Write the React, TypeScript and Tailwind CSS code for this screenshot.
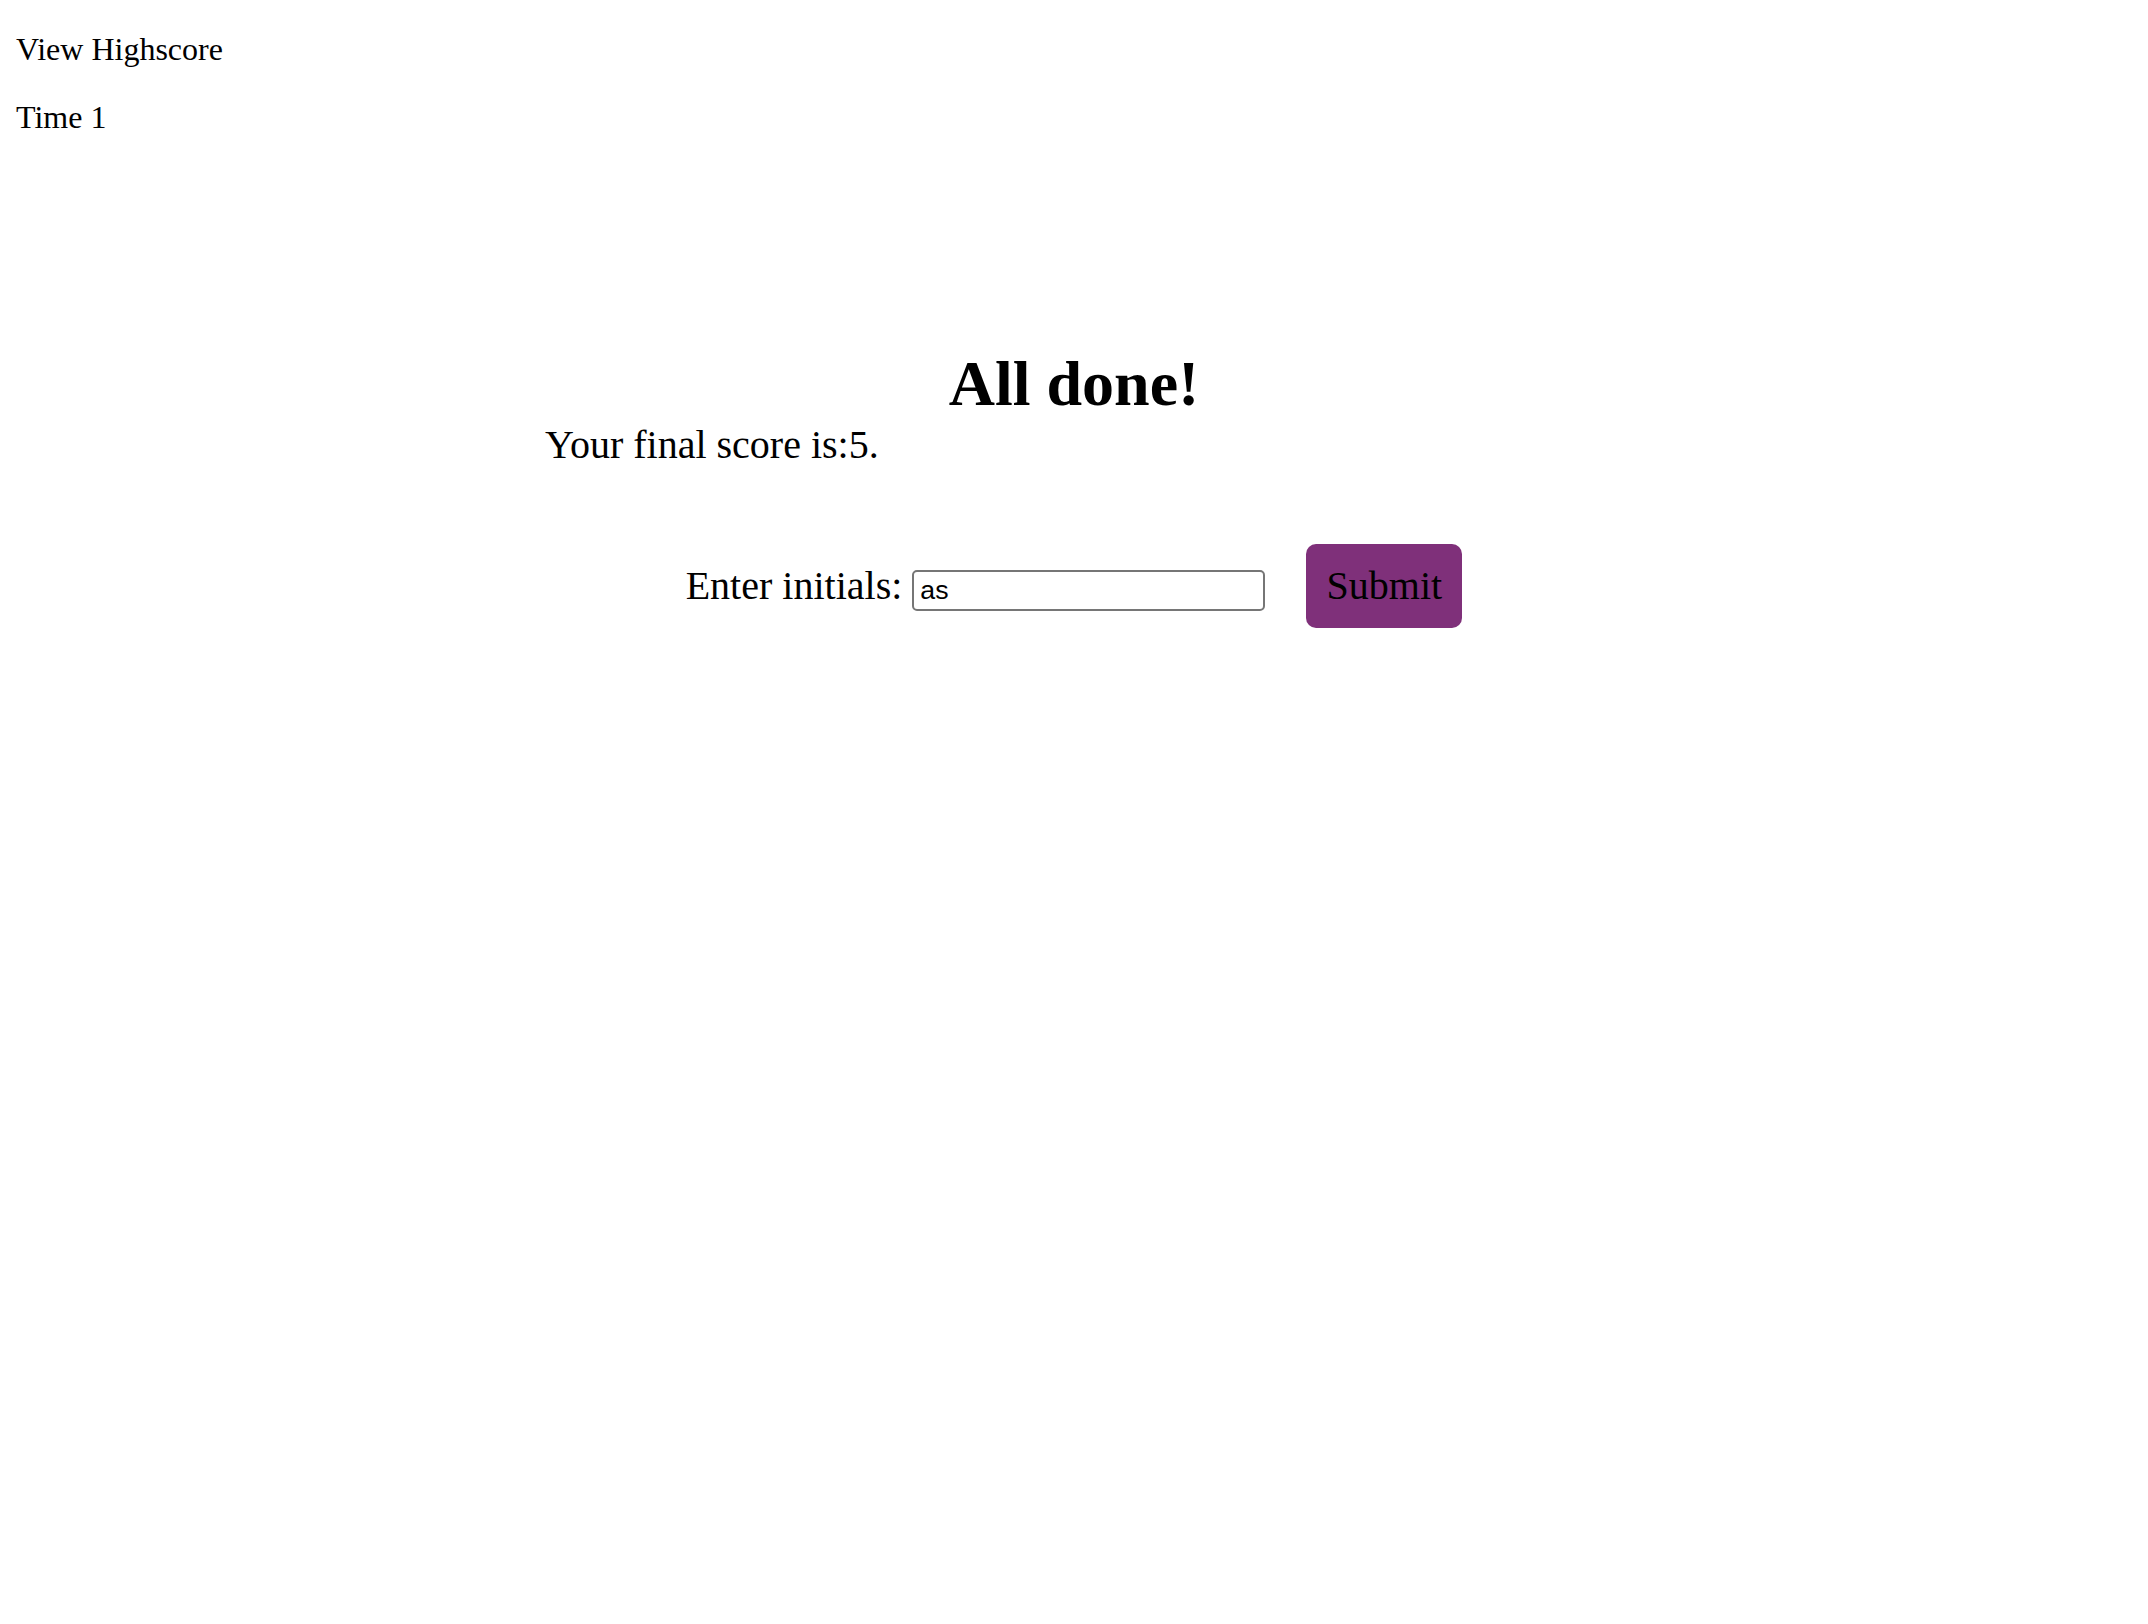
export default function App() {
  return (
    <div className="min-h-screen bg-white text-black font-['Liberation_Serif','Times_New_Roman',serif]">
      {/* Top bar: highscore link + timer */}
      <header className="px-4 pt-[31px]">
        <p className="text-[32px] leading-[1.15]">View Highscore</p>
        <p className="mt-[31px] text-[32px] leading-[1.15]">Time 1</p>
      </header>

      {/* End-of-quiz card */}
      <main className="mx-auto w-[1058px] pt-[211px]">
        <h1 className="text-center text-[64px] font-bold leading-[1.15]">All done!</h1>
        <p className="mt-[1px] text-[40px] leading-[1.2]">Your final score is:5.</p>

        <form
          className="mt-[75px] flex items-baseline justify-center"
          onSubmit={(e) => e.preventDefault()}
        >
          <label htmlFor="initials" className="text-[40px] leading-[1.12]">
            Enter initials:
          </label>
          <input
            id="initials"
            type="text"
            defaultValue="as"
            className="ml-[10px] h-[41px] w-[353px] rounded-[5px] border-2 border-[#767676] px-[6px] font-['Liberation_Sans',Arial,sans-serif] text-[26.67px] leading-[1.15] text-black outline-none"
          />
          <button
            type="submit"
            className="ml-[41px] inline-flex h-[84px] w-[156px] items-center justify-center rounded-[10px] bg-[#7f307a] text-[40px] leading-[1.12] text-black"
          >
            Submit
          </button>
        </form>
      </main>
    </div>
  );
}
